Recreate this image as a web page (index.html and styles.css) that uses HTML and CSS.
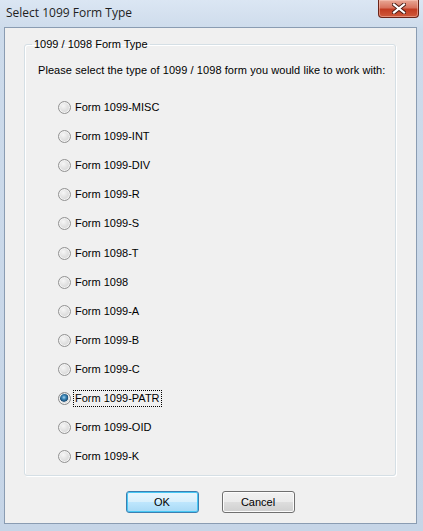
FILE: index.html
```html
<!DOCTYPE html>
<html lang="en">
<head>
    <meta charset="UTF-8">
    <meta name="viewport" content="width=device-width, initial-scale=1.0">
    <title>Select 1099 Form Type</title>
    <link rel="stylesheet" href="styles.css">
</head>
<body>
<div class="window">
    <div class="titlebar">
        <span class="title">Select 1099 Form Type</span>
        <button class="close-button" aria-label="Close">
            <svg width="14" height="11" viewBox="0 0 14 11">
                <path d="M2 1.5 L12 9.5 M12 1.5 L2 9.5" stroke="#4a1a12" stroke-width="4" stroke-linecap="square"/>
                <path d="M2 1.5 L12 9.5 M12 1.5 L2 9.5" stroke="#ffffff" stroke-width="2.2" stroke-linecap="square"/>
            </svg>
        </button>
    </div>
    <div class="client">
        <fieldset class="groupbox">
            <legend>1099 / 1098 Form Type</legend>
            <p class="prompt">Please select the type of 1099 / 1098 form you would like to work with:</p>
            <div class="radio-list">
                <label class="radio-row"><input type="radio" name="formType" class="radio"><span>Form 1099-MISC</span></label>
                <label class="radio-row"><input type="radio" name="formType" class="radio"><span>Form 1099-INT</span></label>
                <label class="radio-row"><input type="radio" name="formType" class="radio"><span>Form 1099-DIV</span></label>
                <label class="radio-row"><input type="radio" name="formType" class="radio"><span>Form 1099-R</span></label>
                <label class="radio-row"><input type="radio" name="formType" class="radio"><span>Form 1099-S</span></label>
                <label class="radio-row"><input type="radio" name="formType" class="radio"><span>Form 1098-T</span></label>
                <label class="radio-row"><input type="radio" name="formType" class="radio"><span>Form 1098</span></label>
                <label class="radio-row"><input type="radio" name="formType" class="radio"><span>Form 1099-A</span></label>
                <label class="radio-row"><input type="radio" name="formType" class="radio"><span>Form 1099-B</span></label>
                <label class="radio-row"><input type="radio" name="formType" class="radio"><span>Form 1099-C</span></label>
                <label class="radio-row"><input type="radio" name="formType" class="radio" checked><span class="focused">Form 1099-PATR</span></label>
                <label class="radio-row"><input type="radio" name="formType" class="radio"><span>Form 1099-OID</span></label>
                <label class="radio-row"><input type="radio" name="formType" class="radio"><span>Form 1099-K</span></label>
            </div>
        </fieldset>
        <div class="button-row">
            <button class="btn btn-default">OK</button>
            <button class="btn">Cancel</button>
        </div>
    </div>
</div>
</body>
</html>
```

FILE: styles.css
```css
body {
    margin: 0;
    background-color: #c9d8e9;
    font-family: "Liberation Sans", Arial, sans-serif;
    font-size: 11px;
    color: #000000;
}

.window {
    box-sizing: border-box;
    width: 423px;
    height: 531px;
    display: flex;
    flex-direction: column;
    padding: 0 6px 7px 4px;
    background: linear-gradient(to bottom, #dbe6f3 0px, #cddbeb 30px, #c6d5e7 100%);
}

.titlebar {
    height: 27px;
    display: flex;
    align-items: flex-start;
    justify-content: space-between;
    flex-shrink: 0;
}

.title {
    font-family: "Open Sans", "Noto Sans", sans-serif;
    font-size: 12px;
    color: #1e1e1e;
    margin-top: 4px;
    margin-left: 2px;
}

.close-button {
    width: 41px;
    height: 18px;
    margin-right: -2px;
    padding: 0;
    border: 1px solid #6b2418;
    border-top: none;
    border-radius: 0 0 4px 4px;
    background: linear-gradient(to bottom, #e9a896 0%, #d8735e 45%, #c23c22 55%, #cf5a3c 100%);
    box-shadow: inset 0 0 0 1px rgba(255, 210, 200, 0.45);
    display: flex;
    align-items: center;
    justify-content: center;
}

.client {
    flex: 1;
    display: flex;
    flex-direction: column;
    border: 1px solid #8a9cb2;
    background-color: #f0f0f0;
    padding: 10px 20px 0 19px;
}

.groupbox {
    margin: 0;
    padding: 0 0 4px 13px;
    min-width: 0;
    border: 1px solid #d5dfe5;
    border-radius: 3px;
    box-shadow: 1px 1px 0 #ffffff inset, 1px 1px 0 #ffffff;
}

.groupbox legend {
    margin-left: -6px;
    padding: 0 2px;
    line-height: 13px;
}

.prompt {
    margin: 13px 0 0 0;
    line-height: 13px;
    letter-spacing: 0.07px;
}

.radio-list {
    display: flex;
    flex-direction: column;
    margin-top: 16px;
    margin-left: 20px;
}

.radio-row {
    height: 29.1px;
    display: flex;
    align-items: center;
    gap: 3px;
}

.radio {
    appearance: none;
    -webkit-appearance: none;
    width: 13px;
    height: 13px;
    margin: 0;
    border: 1px solid #929292;
    border-radius: 50%;
    box-sizing: border-box;
    background: radial-gradient(circle at 40% 35%, #f6f6f6 0%, #e2e2e2 45%, #cfcfcf 100%);
    box-shadow: inset 0 0 0 1px #f4f4f4;
}

.radio:checked {
    border-color: #8a8a8a;
    background:
        radial-gradient(circle at 45% 40%, #a7d4ef 0px, #3c87b8 2px, #1b4f78 4px, transparent 4.6px),
        radial-gradient(circle at 40% 35%, #f6f6f6 0%, #e2e2e2 45%, #cfcfcf 100%);
}

.radio-row span {
    padding: 1px 1px;
    line-height: 13px;
}

.radio-row .focused {
    outline: 1px dotted #000000;
    outline-offset: 0;
}

.button-row {
    display: flex;
    justify-content: center;
    gap: 23px;
    margin-top: 15px;
}

.btn {
    width: 73px;
    height: 22px;
    padding: 0;
    font-family: "Liberation Sans", Arial, sans-serif;
    font-size: 11px;
    color: #000000;
    border: 1px solid #707070;
    border-radius: 3px;
    background: linear-gradient(to bottom, #f2f2f2 0%, #ebebeb 48%, #dddddd 52%, #cfcfcf 100%);
    box-shadow: inset 0 0 0 1px #fcfcfc;
}

.btn-default {
    border-color: #3c7fb1;
    background: linear-gradient(to bottom, #eaf6fd 0%, #d9f0fc 48%, #bee6fd 52%, #a7d9f5 100%);
    box-shadow: inset 0 0 0 1px #48c8f4;
}
```
